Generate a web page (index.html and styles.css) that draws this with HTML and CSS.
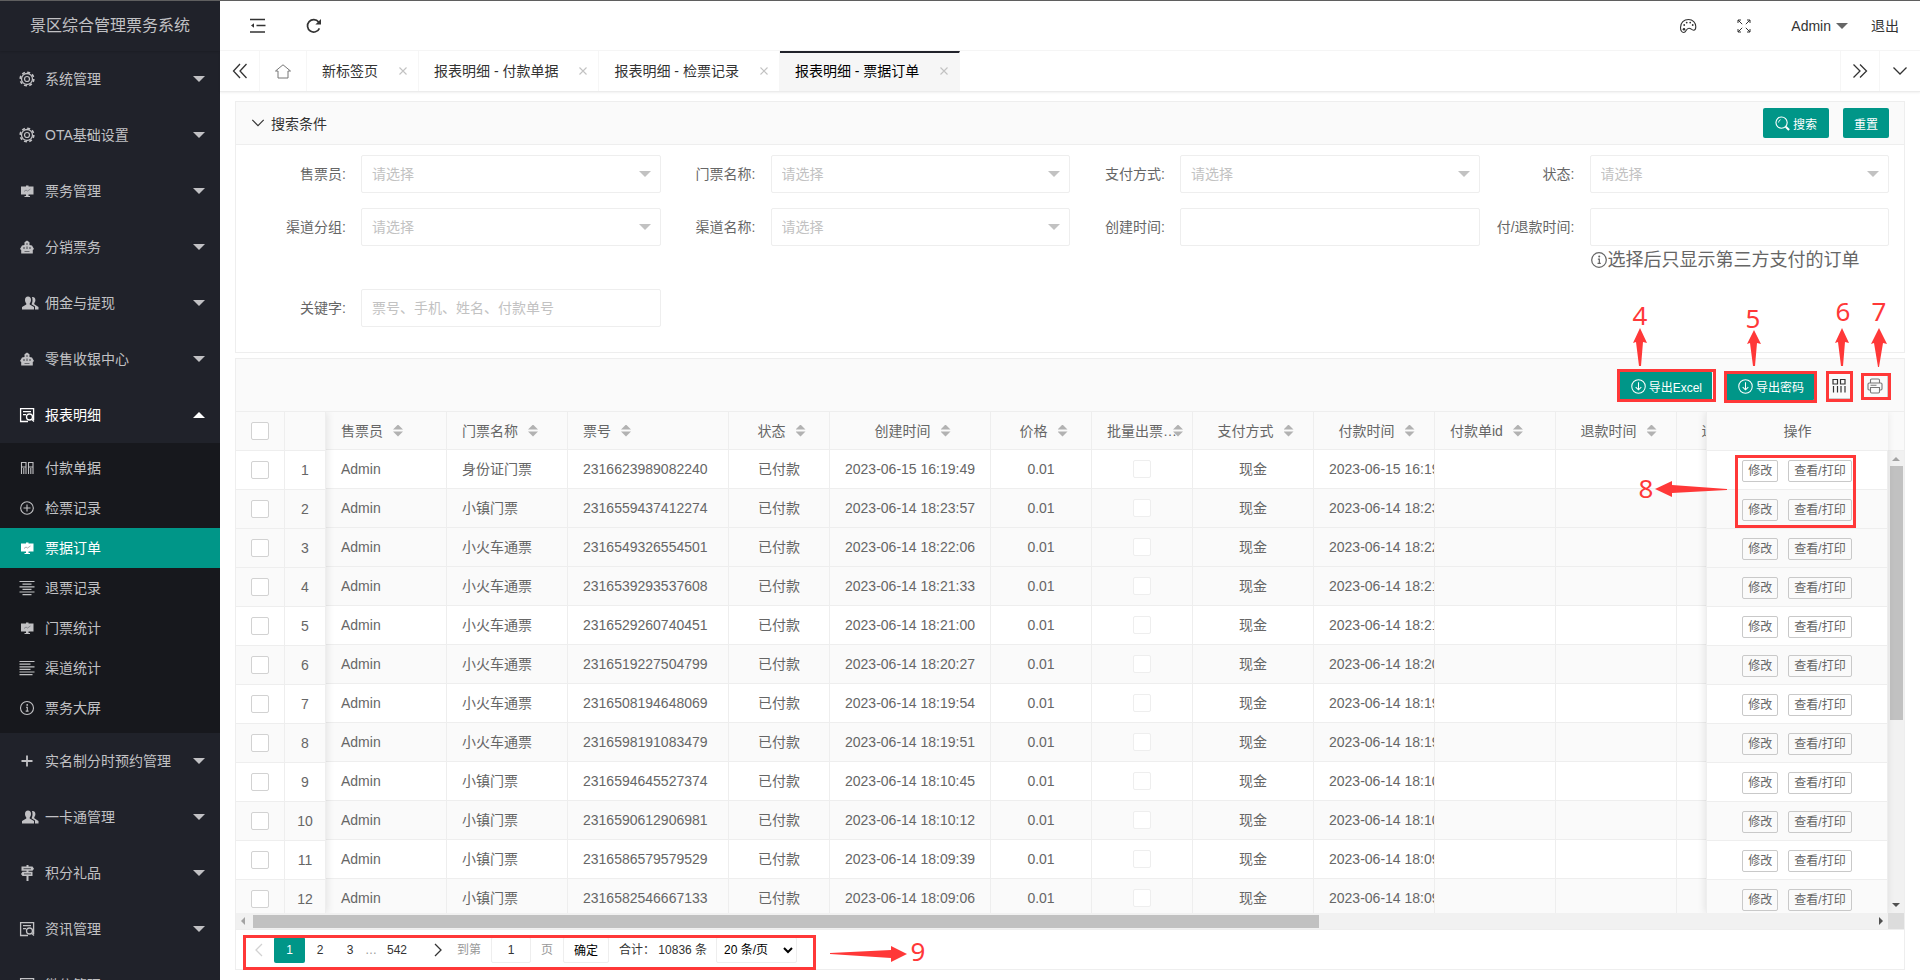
FILE: index.html
```html
<!DOCTYPE html>
<html lang="zh-CN">
<head>
<meta charset="utf-8">
<title>景区综合管理票务系统</title>
<link rel="stylesheet" href="styles.css">
</head>
<body>
<svg class="sprite" aria-hidden="true">
  <symbol id="i-gear" viewBox="0 0 16 16"><g fill="none" stroke="currentColor"><circle cx="8" cy="8" r="2.500" stroke-width="1.200"/><circle cx="8" cy="8" r="5.500" stroke-width="1.300"/><circle cx="8" cy="8" r="6.800" stroke-width="1.600" stroke-dasharray="3 2.340"/></g></symbol>
  <symbol id="i-board" viewBox="0 0 16 16"><path fill="currentColor" d="M7 2.500h2.500v1h5v8H9.500v1.500H11v1H5.500v-1H7v-1.500H2v-8h5z"/><path d="M5 8.500l2-1.500 1.500 1 3-2" fill="none" stroke="#20222a" stroke-opacity=".4" stroke-width=".9"/></symbol>
  <symbol id="i-cart" viewBox="0 0 16 16"><path fill="currentColor" d="M8 1.500l2.500 1.800V6l2.500.5 2 3.500-1.200 1V14.500H2.200V11L1 10l2-3.500L5.500 6V3.300z"/><g fill="#20222a" fill-opacity=".55"><circle cx="8" cy="5" r=".9"/><circle cx="5" cy="9" r="1"/><circle cx="11" cy="9" r="1"/><path d="M7.300 7.500h1.400v2.500H7.300zM5.500 12h5v1h-5z"/></g></symbol>
  <symbol id="i-users" viewBox="0 0 18 16"><g fill="currentColor"><path d="M7 1.500c2 0 3 1.400 3 3.500 0 1.600-.6 2.600-1.300 3.400v1.200L13 12v2.500H1V12l4.300-2.400V8.400C4.600 7.600 4 6.600 4 5c0-2.100 1-3.500 3-3.500z"/><path d="M11 2c1.900-.4 3.400.8 3.400 3 0 1.500-.5 2.400-1.100 3.100v1.200L17.500 12v2.500H14V11.500L10.500 9.200c.5-.8 1-2 1-3.900 0-1.400-.2-2.400-.5-3.300z"/></g></symbol>
  <symbol id="i-report" viewBox="0 0 16 16"><g fill="none" stroke="currentColor" stroke-width="1.300"><path d="M9 14.500H1.600V1.600h13V13"/><path d="M4 4.600h8M4 7.600h3"/><circle cx="10.500" cy="10" r="3"/><path d="M12.600 12.200l2.400 2.300"/></g></symbol>
  <symbol id="i-cols" viewBox="0 0 16 16"><path fill="none" stroke="currentColor" stroke-width="1.100" d="M2.500 2.500h4.500v4.500H2.500zM9.500 2.500H14v4.500H9.500zM2.500 7v7M4.800 8v6M7 7v7M9.500 7v7M11.800 8v6M14 7v7"/></symbol>
  <symbol id="i-cols2" viewBox="0 0 16 16"><path fill="none" stroke="currentColor" stroke-width="1.200" d="M2 1.500h4.500v4.500H2zM9.500 1.500H14v4.500H9.500zM2.500 8v6.500M6.500 8v6.500M10 8v6.500M14 8v6.500"/></symbol>
  <symbol id="i-plusc" viewBox="0 0 16 16"><g fill="none" stroke="currentColor" stroke-width="1.100"><circle cx="8" cy="8" r="6.300"/><path d="M8 4.500v7M4.500 8h7"/></g></symbol>
  <symbol id="i-center" viewBox="0 0 16 16"><path fill="none" stroke="currentColor" stroke-width="1.200" d="M.5 1.500h15M3.500 4.200h9M.5 6.800h15M3.500 9.400h9M.5 12h15M3.500 14.700h9"/></symbol>
  <symbol id="i-left" viewBox="0 0 16 16"><path fill="none" stroke="currentColor" stroke-width="1.200" d="M.5 1.500h15M.5 4.200h11M.5 6.800h15M.5 9.400h11M.5 12h15M.5 14.700h13"/></symbol>
  <symbol id="i-info" viewBox="0 0 16 16"><g fill="none" stroke="currentColor" stroke-width="1.100"><circle cx="8" cy="8" r="6.500"/><path d="M7 7.300h1.300v3.500M6.700 11.100h2.900"/></g><circle cx="8.200" cy="4.900" r=".9" fill="currentColor"/></symbol>
  <symbol id="i-plus" viewBox="0 0 16 16"><path stroke="currentColor" stroke-width="1.800" d="M8 2.500v11M2.500 8h11"/></symbol>
  <symbol id="i-sign" viewBox="0 0 16 16"><path fill="currentColor" d="M7.500 0h2v1.600h4L15 3.700l-1.500 2h-4v1h4V11h-4v5h-2v-5h-4L2 8.900l1.500-2.200h4v-1h-5V1.600h5z"/><path stroke="#20222a" stroke-opacity=".7" stroke-width="1" d="M4.500 3.700h7.500M5 8.900h7"/></symbol>
  <symbol id="i-x" viewBox="0 0 10 10"><path fill="none" stroke="currentColor" stroke-width="1.100" d="M1.500 1.500l7 7M8.500 1.500l-7 7"/></symbol>
  <symbol id="i-down" viewBox="0 0 16 16"><path fill="none" stroke="currentColor" stroke-width="1.300" d="M1.500 4.500L8 11l6.500-6.500"/></symbol>
  <symbol id="i-dload" viewBox="0 0 16 16"><g fill="none" stroke="currentColor" stroke-width="1.100"><circle cx="8" cy="8" r="7.200"/><path d="M8 3.500v8M5 8.600l3 3 3-3"/></g></symbol>
</svg>
<div class="app">
  <aside class="side">
    <h1 class="logo">景区综合管理票务系统</h1>
    <nav class="nav">
      <a class="nav-item" href="#"><svg class="ico"><use href="#i-gear"/></svg>系统管理<i class="caret"></i></a>
      <a class="nav-item" href="#"><svg class="ico"><use href="#i-gear"/></svg>OTA基础设置<i class="caret"></i></a>
      <a class="nav-item" href="#"><svg class="ico"><use href="#i-board"/></svg>票务管理<i class="caret"></i></a>
      <a class="nav-item" href="#"><svg class="ico"><use href="#i-cart"/></svg>分销票务<i class="caret"></i></a>
      <a class="nav-item" href="#"><svg class="ico ico-wide"><use href="#i-users"/></svg>佣金与提现<i class="caret"></i></a>
      <a class="nav-item" href="#"><svg class="ico"><use href="#i-cart"/></svg>零售收银中心<i class="caret"></i></a>
      <a class="nav-item is-open" href="#"><svg class="ico"><use href="#i-report"/></svg>报表明细<i class="caret caret-up"></i></a>
      <div class="sub">
        <a class="sub-item" href="#"><svg class="ico"><use href="#i-cols"/></svg>付款单据</a>
        <a class="sub-item" href="#"><svg class="ico"><use href="#i-plusc"/></svg>检票记录</a>
        <a class="sub-item is-active" href="#"><svg class="ico"><use href="#i-board"/></svg>票据订单</a>
        <a class="sub-item" href="#"><svg class="ico"><use href="#i-center"/></svg>退票记录</a>
        <a class="sub-item" href="#"><svg class="ico"><use href="#i-board"/></svg>门票统计</a>
        <a class="sub-item" href="#"><svg class="ico"><use href="#i-left"/></svg>渠道统计</a>
        <a class="sub-item" href="#"><svg class="ico"><use href="#i-info"/></svg>票务大屏</a>
      </div>
      <a class="nav-item" href="#"><svg class="ico"><use href="#i-plus"/></svg>实名制分时预约管理<i class="caret"></i></a>
      <a class="nav-item" href="#"><svg class="ico ico-wide"><use href="#i-users"/></svg>一卡通管理<i class="caret"></i></a>
      <a class="nav-item" href="#"><svg class="ico"><use href="#i-sign"/></svg>积分礼品<i class="caret"></i></a>
      <a class="nav-item" href="#"><svg class="ico"><use href="#i-report"/></svg>资讯管理<i class="caret"></i></a>
      <a class="nav-item" href="#"><svg class="ico"><use href="#i-report"/></svg>微信管理<i class="caret"></i></a>
    </nav>
  </aside>

  <div class="main">
    <header class="top">
      <div class="top-left">
        <button class="bare" aria-label="收起菜单"><svg width="16" height="16" viewBox="0 0 16 16"><path d="M0 1.500h15M6.500 7.500h9M0 14h15" stroke="currentColor" stroke-width="1.600"/><path d="M1 7.500l3-2.200v4.400z" fill="currentColor"/></svg></button>
        <button class="bare" aria-label="刷新"><svg width="16" height="16" viewBox="0 0 16 16"><path d="M13.400 10.300A6.200 6.200 0 1 1 12.600 4" fill="none" stroke="currentColor" stroke-width="1.700"/><path d="M15 1v5.600H9.400z" fill="currentColor"/></svg></button>
      </div>
      <div class="top-right">
        <button class="bare" aria-label="主题"><svg width="18" height="16" viewBox="0 0 18 16"><path d="M9.500 1.500C5 1.500 1.500 4.700 1.500 9.500c0 2.800 1.200 5 3.200 5 2.800 0 2-4.300 5.300-4.300 2.200 0 2.400 2 4.600 2 1.500 0 2.200-1.200 2.200-3.400 0-4.300-3-7.300-7.300-7.300z" fill="none" stroke="currentColor" stroke-width="1.100"/><g fill="currentColor"><circle cx="5.200" cy="7" r=".9"/><circle cx="7.700" cy="4.600" r=".9"/><circle cx="11.200" cy="4.600" r=".9"/><circle cx="13.700" cy="7" r=".9"/><circle cx="5" cy="11.200" r="1.300"/></g></svg></button>
        <button class="bare" aria-label="全屏"><svg width="14" height="14" viewBox="0 0 14 14"><path d="M1 4V1h3M10 1h3v3M13 10v3h-3M4 13H1v-3M1 1l4.200 4.200M13 1L8.800 5.200M13 13L8.800 8.800M1 13l4.200-4.200" fill="none" stroke="currentColor"/></svg></button>
        <button class="bare user">Admin<i class="caret caret-user"></i></button>
        <a class="logout" href="#">退出</a>
      </div>
    </header>

    <div class="tabs">
      <button class="tab-ctl" aria-label="向左"><svg width="16" height="16" viewBox="0 0 16 16"><path d="M8 1L1.500 8 8 15M14.500 1L8 8l6.500 7" fill="none" stroke="currentColor" stroke-width="1.300"/></svg></button>
      <a class="tab tab-home" href="#" aria-label="主页"><svg width="16" height="15" viewBox="0 0 16 15"><path d="M.5 7L8 .8 15.500 7H13v7H3V7z" fill="none" stroke="currentColor" stroke-width="1"/></svg></a>
      <a class="tab" href="#">新标签页<svg class="tab-x"><use href="#i-x"/></svg></a>
      <a class="tab" href="#">报表明细 - 付款单据<svg class="tab-x"><use href="#i-x"/></svg></a>
      <a class="tab" href="#">报表明细 - 检票记录<svg class="tab-x"><use href="#i-x"/></svg></a>
      <a class="tab is-active" href="#">报表明细 - 票据订单<svg class="tab-x"><use href="#i-x"/></svg></a>
      <button class="tab-ctl tab-next" aria-label="向右"><svg width="16" height="16" viewBox="0 0 16 16"><path d="M1.500 1.500L8 8l-6.500 6.500M8 1.500L14.500 8 8 14.500" fill="none" stroke="currentColor" stroke-width="1.300"/></svg></button>
      <button class="tab-ctl" aria-label="更多"><svg width="16" height="16"><use href="#i-down"/></svg></button>
    </div>

    <main class="content">
      <section class="card">
        <div class="card-head">
          <button class="bare collapse"><svg width="14" height="14"><use href="#i-down"/></svg>搜索条件</button>
          <button class="btn btn-search"><svg width="15" height="15" viewBox="0 0 16 16"><circle cx="7" cy="7" r="6" fill="none" stroke="currentColor" stroke-width="1.200"/><path d="M3.800 7A3.200 3.200 0 0 1 6 3.900" fill="none" stroke="currentColor" stroke-width=".9"/><path d="M11.500 11.500L15 15" stroke="currentColor" stroke-width="2.200"/></svg>搜索</button>
          <button class="btn btn-reset">重置</button>
        </div>
        <form class="filters">
          <div class="field"><label for="f1">售票员:</label><div class="pick"><select id="f1"><option>请选择</option></select></div></div>
          <div class="field"><label for="f2">门票名称:</label><div class="pick"><select id="f2"><option>请选择</option></select></div></div>
          <div class="field"><label for="f3">支付方式:</label><div class="pick"><select id="f3"><option>请选择</option></select></div></div>
          <div class="field"><label for="f4">状态:</label><div class="pick"><select id="f4"><option>请选择</option></select></div></div>
          <div class="field"><label for="f5">渠道分组:</label><div class="pick"><select id="f5"><option>请选择</option></select></div></div>
          <div class="field"><label for="f6">渠道名称:</label><div class="pick"><select id="f6"><option>请选择</option></select></div></div>
          <div class="field"><label for="f7">创建时间:</label><input id="f7" type="text"></div>
          <div class="field"><label for="f8">付/退款时间:</label><div class="stack"><input id="f8" type="text"><p class="hint"><svg width="18" height="18"><use href="#i-info"/></svg>选择后只显示第三方支付的订单</p></div></div>
          <div class="field"><label for="f9">关键字:</label><input id="f9" type="text" placeholder="票号、手机、姓名、付款单号"></div>
        </form>
      </section>

      <section class="card grid">
        <div class="toolbar">
          <button class="btn btn-tool"><svg width="15" height="15"><use href="#i-dload"/></svg>导出Excel</button>
          <button class="btn btn-tool"><svg width="15" height="15"><use href="#i-dload"/></svg>导出密码</button>
          <div class="tool-icons">
            <button class="icon-btn" aria-label="筛选列"><svg width="16" height="16"><use href="#i-cols2"/></svg></button>
            <button class="icon-btn icon-print" aria-label="打印"><svg width="16" height="16" viewBox="0 0 16 16"><g fill="none" stroke="currentColor" stroke-width="1.100"><path d="M3.500 5V2.200Q3.500 1 4.700 1h6.600q1.200 0 1.200 1.200V5M3.500 12H2.200Q1 12 1 10.800V6.200Q1 5 2.200 5h11.600Q15 5 15 6.200v4.600q0 1.200-1.200 1.200h-1.300"/><path d="M3.500 9.500h9v4.300q0 1.200-1.200 1.200H4.700q-1.200 0-1.200-1.200zM3.500 7.200h6"/></g></svg></button>
          </div>
        </div>
        <div class="view">
          <div class="panes">
            <div class="pane pane-left">
              <table>
                <colgroup><col class="w49"><col class="w41"></colgroup>
                <thead><tr><th><input type="checkbox" aria-label="全选"></th><th></th></tr></thead>
                <tbody id="rows-left"></tbody>
              </table>
            </div>
            <div class="pane pane-main">
              <table>
                <colgroup><col class="w121"><col class="w121"><col class="w161"><col class="w101"><col class="w161"><col class="w101"><col class="w101"><col class="w121"><col class="w121"><col class="w121"><col class="w121"><col class="w121"></colgroup>
                <thead><tr>
                  <th class="start">售票员<i class="sort"></i></th>
                  <th class="start">门票名称<i class="sort"></i></th>
                  <th class="start">票号<i class="sort"></i></th>
                  <th>状态<i class="sort"></i></th>
                  <th>创建时间<i class="sort"></i></th>
                  <th>价格<i class="sort"></i></th>
                  <th class="tight">批量出票…<i class="sort"></i></th>
                  <th>支付方式<i class="sort"></i></th>
                  <th>付款时间<i class="sort"></i></th>
                  <th class="start">付款单id<i class="sort"></i></th>
                  <th>退款时间<i class="sort"></i></th>
                  <th>退款金额<i class="sort"></i></th>
                </tr></thead>
                <tbody id="rows-main"></tbody>
              </table>
            </div>
            <div class="pane pane-right">
              <table>
                <thead><tr><th>操作</th></tr></thead>
                <tbody id="rows-right"></tbody>
              </table>
            </div>
            <div class="vbar"><div class="vtrack"><i class="arr arr-up"></i><div class="vthumb-area"><div class="vthumb"></div></div><i class="arr arr-down"></i></div></div>
          </div>
          <div class="hbar"><i class="arr arr-left"></i><div class="hthumb-area"><div class="hthumb"></div></div><i class="arr arr-right"></i><div class="corner"></div></div>
        </div>
        <div class="pager">
          <button class="pg pg-prev" aria-label="上一页" disabled><svg width="12" height="14" viewBox="0 0 12 14"><path d="M9 1L3 7l6 6" fill="none" stroke="currentColor" stroke-width="1.300"/></svg></button>
          <button class="pg is-current">1</button>
          <button class="pg">2</button>
          <button class="pg">3</button>
          <span class="dots">…</span>
          <button class="pg pg-last">542</button>
          <button class="pg pg-next" aria-label="下一页"><svg width="12" height="14" viewBox="0 0 12 14"><path d="M3 1l6 6-6 6" fill="none" stroke="currentColor" stroke-width="1.300"/></svg></button>
          <label class="muted" for="jump">到第</label>
          <input id="jump" class="jump" type="text" value="1">
          <span class="muted">页</span>
          <button class="go">确定</button>
          <span class="total">合计： 10836 条</span>
          <select class="size" aria-label="每页条数"><option>20 条/页</option></select>
        </div>

        <svg class="notes notes-right" viewBox="1614 299 290 240" aria-hidden="true">
          <g fill="none" stroke="#ff3838" stroke-width="3">
            <rect x="1618.500" y="370.500" width="96" height="30"/>
            <rect x="1725.500" y="372.500" width="90" height="29"/>
            <rect x="1827.500" y="372.500" width="24" height="28"/>
            <rect x="1862.500" y="374.500" width="27" height="24"/>
            <rect x="1736.500" y="456.500" width="118" height="70"/>
          </g>
          <g fill="#ff3838">
            <path d="M1640 328l7 15-4-1-2 24h-2l-3-24-3 1z"/>
            <path d="M1754 330l7 14-4-1-2 23h-2l-3-23-3 1z"/>
            <path d="M1842 328l7 15-4-1-2 24h-2l-3-24-3 1z"/>
            <path d="M1879 328l8 16-4-1-4 24h-1l-4-24-3 1z"/>
            <path d="M1655 489l17-8v4l55 4v1l-55 3v4z"/>
          </g>
          <g class="note-num">
            <text x="1640" y="325">4</text><text x="1753" y="328">5</text><text x="1843" y="321">6</text><text x="1879" y="321">7</text><text x="1646" y="498">8</text>
          </g>
        </svg>
        <svg class="notes notes-left" viewBox="236 921 700 50" aria-hidden="true">
          <rect x="244.500" y="936.500" width="570" height="32" fill="none" stroke="#ff3838" stroke-width="3"/>
          <path d="M907 954l-16 8v-4l-61-4v-1l61-3v-4z" fill="#ff3838"/>
          <text class="note-num" x="918" y="961">9</text>
        </svg>
      </section>
    </main>
  </div>
</div>
<script src="rows.js"></script>
</body>
</html>
```

FILE: styles.css
```css
* { box-sizing: border-box; }
body, button, input, select { font-family: "Liberation Sans", "Noto Sans CJK SC", sans-serif; }
body { margin: 0; font-size: 14px; line-height: 24px; color: #666; background: #fff; }
h1, p { margin: 0; }
a { color: inherit; text-decoration: none; }
button { margin: 0; padding: 0; border: 0; color: inherit; cursor: pointer; }
svg { display: block; flex: none; }
.sprite { position: absolute; width: 0; height: 0; }
.app { display: flex; height: 100vh; overflow: hidden; border-top: 1px solid #5f5f5f; }

/* sidebar */
.side { flex: none; width: 220px; overflow: hidden; background: #20222a; color: #c1c1c4; }
.logo { height: 50px; line-height: 50px; font-size: 16px; font-weight: 400; text-align: center; box-shadow: 0 1px 2px rgba(0, 0, 0, .15); }
.nav-item, .sub-item { display: flex; align-items: center; padding: 0 15px 0 19px; height: 56px; }
.ico { width: 16px; height: 16px; margin-right: 10px; }
.ico-wide { width: 18px; margin: 0 6px 0 2px; }
.caret { margin-left: auto; border: 6px solid transparent; border-top-color: #c1c1c4; border-bottom-width: 0; }
.caret-up { border-width: 0 6px 6px; border-bottom-color: #fff; }
.is-open { color: #fff; }
.sub { padding: 5px 0; background: #17181d; }
.sub-item { height: 40px; }
.sub-item.is-active { background: #009688; color: #fff; }

/* top bar */
.main { flex: 1; min-width: 0; display: flex; flex-direction: column; }
.top { display: flex; align-items: center; justify-content: space-between; height: 50px; padding: 0 21px 0 30px; border-bottom: 1px solid #f6f6f6; color: #333; }
.top-left, .top-right { display: flex; align-items: center; }
.top-left { gap: 40px; }
.bare { display: flex; align-items: center; background: none; font-size: 14px; }
.top-right .bare { margin-right: 40px; }
.top-right .user { margin-right: 23px; }
.caret-user { margin-left: 5px; border-top-color: #666; }

/* tabs */
.tabs { display: flex; height: 41px; border-bottom: 1px solid #ececec; color: #333; box-shadow: 0 1px 2px rgba(0, 0, 0, .06); }
.tab, .tab-ctl { display: flex; align-items: center; border-right: 1px solid #f6f6f6; }
.tab { padding: 0 10px 0 15px; }
.tab-home { padding: 0 15px; color: #777; }
.tab-x { width: 10px; height: 10px; margin-left: 20px; color: #c2c2c2; }
.tab.is-active { background: #f6f6f6; color: #000; border-top: 2px solid #20222a; padding-bottom: 2px; }
.tab-ctl { justify-content: center; width: 40px; background: none; }
.tab-next { margin-left: auto; border-left: 1px solid #f6f6f6; }
.tab-ctl:last-child { border-right: 0; }

/* cards */
.content { flex: 1; min-height: 0; display: flex; flex-direction: column; gap: 5px; padding: 9px 15px 10px; }
.card { border: 1px solid #eee; }
.card-head { display: flex; align-items: center; gap: 14px; height: 43px; padding: 0 15px; background: #fafafa; border-bottom: 1px solid #eee; }
.collapse { gap: 6px; margin-right: auto; color: #333; }
.btn { display: flex; align-items: center; gap: 3px; height: 30px; padding: 0 12px; border-radius: 2px; background: #009688; color: #fff; font-size: 12px; }
.btn-reset { padding: 0 11px; }
.btn-tool { padding: 0 10px 0 14px; }
.filters { display: grid; grid-template-columns: repeat(4, 1fr); row-gap: 15px; align-items: start; padding: 10px 15px 25px; }
.field { display: flex; }
.field label { flex: none; width: 110px; padding: 7px 15px 7px 0; text-align: right; }
.pick, .stack { flex: 1; min-width: 0; position: relative; }
.field input, .field select { flex: 1; display: block; width: 100%; min-width: 0; height: 38px; padding: 0 10px; border: 1px solid #eee; border-radius: 2px; background: #fff; font-size: 14px; color: #c2c2c2; appearance: none; }
.field input::placeholder { color: #c2c2c2; }
.pick::after { content: ""; position: absolute; right: 10px; top: 16px; border: 6px solid transparent; border-top-color: #c2c2c2; border-bottom-width: 0; pointer-events: none; }
.hint { display: flex; align-items: center; height: 28px; font-size: 18px; white-space: nowrap; }

/* grid */
.grid { position: relative; flex: 1; min-height: 0; display: flex; flex-direction: column; }
.toolbar { display: flex; justify-content: flex-end; align-items: center; gap: 12px; padding: 12px 16px 10px; background: #fafafa; border-bottom: 1px solid #eee; }
.tool-icons { display: flex; gap: 10px; }
.icon-btn { display: flex; align-items: center; justify-content: center; width: 26px; height: 26px; border: 1px solid #ccc; background: none; color: #333; }
.icon-print { color: #777; }
.view { flex: 1; min-height: 0; display: flex; flex-direction: column; border-bottom: 1px solid #eee; }
.panes { flex: 1; min-height: 0; display: flex; overflow: hidden; }
.pane { flex: none; }
.pane table { width: 100%; table-layout: fixed; border-collapse: separate; border-spacing: 0; }
.pane-left { width: 90px; z-index: 1; background: #fff; box-shadow: 1px 0 8px rgba(0, 0, 0, .1); }
.pane-main { flex: 1; min-width: 0; overflow: hidden; }
.pane-main table { width: 1452px; }
.pane-right { width: 182px; z-index: 1; background: #fff; border-left: 1px solid #eee; box-shadow: -1px 0 8px rgba(0, 0, 0, .1); }
.w41 { width: 41px; }
.w49 { width: 49px; }
.w101 { width: 101px; }
.w121 { width: 121px; }
.w161 { width: 161px; }
th, td { height: 39px; padding: 0 15px; border: solid #eee; border-width: 0 1px 1px 0; font-weight: 400; text-align: center; white-space: nowrap; overflow: hidden; }
.pane-left th, .pane-left td { padding: 0; }
.pane-main th { height: 38px; }
.pane-main td:nth-child(9) { text-align: left; }
th { background: #fafafa; }
.pane-right th { border-right: 0; }
.pane-right td { padding-top: 2px; }
.start, .pane-main .start { text-align: left; }
tbody tr:nth-child(even), tbody .is-hover { background: #fafafa; }
.sort { display: inline-block; vertical-align: -1px; width: 10px; height: 12px; margin: 0 -5px 0 10px; background: #b2b2b2; clip-path: polygon(50% 0, 100% 5px, 0 5px, 0 7px, 100% 7px, 50% 100%, 0 7px, 0 5px); }
.tight .sort { margin-left: -4px; }
input[type="checkbox"] { appearance: none; display: block; width: 18px; height: 18px; margin: 0 auto; border: 1px solid #d2d2d2; border-radius: 2px; background: #fff; }
input[type="checkbox"]:disabled { border-color: #eee; }
.ops { display: flex; justify-content: center; gap: 10px; }
.ops button { height: 22px; padding: 0 5px; border: 1px solid #c9c9c9; border-radius: 2px; background: none; font-size: 12px; line-height: 20px; }

/* scroll bars */
.vbar { flex: none; width: 16px; display: flex; flex-direction: column; padding-top: 38px; background: #fafafa; }
.vtrack { flex: 1; display: flex; flex-direction: column; align-items: center; justify-content: space-between; padding: 6px 0; border-top: 1px solid #eee; background: #f1f1f1; }
.vthumb-area { flex: 1; width: 13px; margin: 5px 0 6px; }
.vthumb { height: 59%; background: #c1c1c1; }
.hbar { display: flex; align-items: center; height: 16px; padding-left: 5px; background: #f1f1f1; }
.hthumb-area { flex: 1; margin: 0 11px 0 8px; }
.hthumb { width: 66%; height: 13px; background: #c1c1c1; }
.corner { width: 16px; height: 16px; margin-left: 5px; background: #dcdcdc; }
.arr { border: 4px solid transparent; }
.arr-up { border-top-width: 0; border-bottom-color: #a3a3a3; }
.arr-down { border-bottom-width: 0; border-top-color: #505050; }
.arr-left { border-left-width: 0; border-right-color: #a3a3a3; }
.arr-right { border-right-width: 0; border-left-color: #505050; }

/* pager */
.pager { display: flex; align-items: center; height: 39px; padding: 0 7px; font-size: 12px; color: #333; }
.pg { display: flex; align-items: center; justify-content: center; width: 30px; height: 26px; background: none; font-size: 12px; }
.pg-prev { width: 31px; color: #d2d2d2; }
.is-current { width: 31px; border-radius: 2px; background: #009688; color: #fff; }
.dots { width: 10px; color: #999; text-align: center; }
.pg-last { width: 44px; }
.pg-next { width: 38px; }
.muted { color: #999; }
.jump, .go, .size { height: 26px; border: 1px solid #eee; border-radius: 2px; background: #fff; font-size: 12px; color: #333; }
.jump { width: 40px; margin: 0 10px; text-align: center; }
.go { width: 46px; margin: 0 10px; color: #000; }
.size { width: 81px; margin-left: 9px; padding: 0 3px; color: #000; }

/* notes */
.notes { position: absolute; z-index: 2; pointer-events: none; }
.notes-right { right: 0; top: -60px; width: 290px; height: 240px; }
.notes-left { left: 0; bottom: -2px; width: 700px; height: 50px; }
.note-num { font-family: "Noto Sans", sans-serif; font-size: 26px; fill: #ff3838; text-anchor: middle; }
```

FILE: rows.js
```js
const orders = [
  ["身份证门票", "2316623989082240", "2023-06-15 16:19:49"],
  ["小镇门票", "2316559437412274", "2023-06-14 18:23:57"],
  ["小火车通票", "2316549326554501", "2023-06-14 18:22:06"],
  ["小火车通票", "2316539293537608", "2023-06-14 18:21:33"],
  ["小火车通票", "2316529260740451", "2023-06-14 18:21:00"],
  ["小火车通票", "2316519227504799", "2023-06-14 18:20:27"],
  ["小火车通票", "2316508194648069", "2023-06-14 18:19:54"],
  ["小火车通票", "2316598191083479", "2023-06-14 18:19:51"],
  ["小镇门票", "2316594645527374", "2023-06-14 18:10:45"],
  ["小镇门票", "2316590612906981", "2023-06-14 18:10:12"],
  ["小镇门票", "2316586579579529", "2023-06-14 18:09:39"],
  ["小镇门票", "2316582546667133", "2023-06-14 18:09:06"]
];
const hovered = 2;
const fill = (id, cells) => {
  document.getElementById(id).innerHTML = orders
    .map((o, i) => `<tr${i === hovered ? ' class="is-hover"' : ""}>${cells(o, i)}</tr>`)
    .join("");
};
fill("rows-left", (o, i) => `<td><input type="checkbox" aria-label="选择第${i + 1}行"></td><td>${i + 1}</td>`);
fill("rows-main", ([name, no, time]) =>
  `<td class="start">Admin</td><td class="start">${name}</td><td class="start">${no}</td><td>已付款</td><td>${time}</td><td>0.01</td>` +
  `<td><input type="checkbox" aria-label="批量出票" disabled></td><td>现金</td><td>${time}</td><td></td><td></td><td></td>`);
fill("rows-right", () => `<td><div class="ops"><button>修改</button><button>查看/打印</button></div></td>`);
```
